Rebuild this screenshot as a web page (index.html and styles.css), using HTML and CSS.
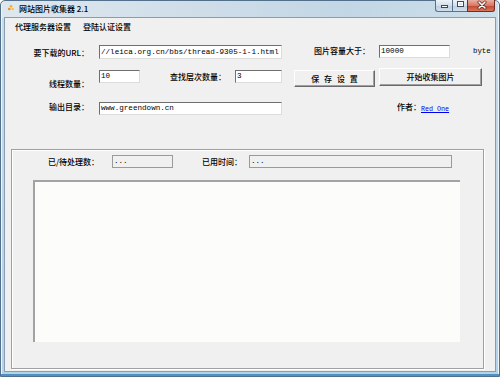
FILE: index.html
```html
<!DOCTYPE html>
<html lang="zh-CN">
<head>
<meta charset="utf-8">
<title>网站图片收集器 2.1</title>
<link rel="stylesheet" href="styles.css">
</head>
<body>
<div class="window">
  <div class="titlebar">
    <svg class="app-icon" width="6" height="6" viewBox="0 0 6 6">
      <circle cx="3" cy="1.3" r="1.3" fill="#f6b21c"/>
      <circle cx="1.3" cy="4" r="1.3" fill="#ef8d16"/>
      <circle cx="4.7" cy="4" r="1.3" fill="#f7c53a"/>
    </svg>
    <span class="title cjk">网站图片收集器 2.1</span>
    <div class="controls">
      <div class="ctl ctl-min">
        <svg width="17" height="12" viewBox="0 0 17 12"><rect x="5.5" y="6.5" width="6" height="2" fill="#fff" stroke="#3a4a5a" stroke-width="1"/></svg>
      </div>
      <div class="ctl ctl-max">
        <svg width="15" height="12" viewBox="0 0 15 12"><rect x="4.5" y="2.5" width="6" height="5" fill="none" stroke="#3a4a5a" stroke-width="1"/><rect x="5.5" y="3.5" width="4" height="3" fill="none" stroke="#fff" stroke-width="1"/></svg>
      </div>
      <div class="ctl ctl-close">
        <svg width="28" height="12" viewBox="0 0 28 12"><path d="M11 3 L17 9 M17 3 L11 9" stroke="#5a1f18" stroke-width="3" stroke-linecap="round"/><path d="M11 3 L17 9 M17 3 L11 9" stroke="#fff" stroke-width="1.6" stroke-linecap="round"/></svg>
      </div>
    </div>
  </div>
  <div class="client">
    <div class="menubar cjk">
      <span class="menu-item">代理服务器设置</span>
      <span class="menu-item">登陆认证设置</span>
    </div>
    <div class="form">
      <div class="row row1">
        <span class="lbl cjk lbl-url">要下载的URL：</span>
        <div class="input in-url">//leica.org.cn/bbs/thread-9305-1-1.html</div>
        <span class="cjk lbl-size">图片容量大于：</span>
        <div class="input in-size">10000</div>
        <span class="unit">byte</span>
      </div>
      <div class="row row2">
        <span class="lbl cjk lbl-threads">线程数量：</span>
        <div class="input in-threads">10</div>
        <span class="cjk lbl-depth">查找层次数量：</span>
        <div class="input in-depth">3</div>
        <div class="btn cjk btn-save">保 存 设 置</div>
        <div class="btn cjk btn-start">开始收集图片</div>
      </div>
      <div class="row row3">
        <span class="lbl cjk lbl-out">输出目录：</span>
        <div class="input in-out">www.greendown.cn</div>
        <span class="cjk lbl-author">作者：</span>
        <a class="link" href="#">Red One</a>
      </div>
    </div>
    <div class="group">
      <div class="status-row">
        <span class="cjk lbl-done">已/待处理数：</span>
        <div class="status-box box-count">...</div>
        <span class="cjk lbl-time">已用时间：</span>
        <div class="status-box box-time">...</div>
      </div>
      <div class="log"></div>
    </div>
  </div>
</div>
</body>
</html>
```

FILE: styles.css
```css
* { box-sizing: border-box; }
html, body { margin: 0; padding: 0; }
body { width: 500px; height: 377px; overflow: hidden; background: #fff; }

.cjk { font-family: "Noto Sans CJK SC", "Liberation Sans", sans-serif; font-size: 8px; font-weight: 500; color: #000; }

.window {
  width: 500px; height: 377px;
  display: flex; flex-direction: column;
  border: 1px solid #52708c;
  border-radius: 5px 5px 0 0;
  background:
    linear-gradient(90deg, #dfe7ee 0%, #cfdde9 40%, #c2d6e5 70%, #cddfeb 100%) top / 100% 17px no-repeat,
    linear-gradient(180deg, #c9dceb 0%, #b4d2e8 100%);
  box-shadow: inset 0 -2px 0 #4d92c4, inset 1px 0 0 #eef5fb, inset -1px 0 0 #eef5fb;
}

.titlebar { height: 16px; display: flex; align-items: flex-start; flex: none; }
.app-icon { margin: 4px 0 0 7px; flex: none; }
.title { margin: 2px 0 0 5px; line-height: 12px; font-size: 8px; }

.controls { margin: -1px 4px 0 auto; display: flex; height: 12px; }
.ctl { height: 12px; border: 1px solid #5e7286; border-top: none; }
.ctl svg { display: block; margin-top: -1px; }
.ctl-min { width: 17px; border-radius: 0 0 0 3px; border-right: none;
  background: linear-gradient(#eef3f8, #d3dfea 50%, #bccfe0 51%, #cfdfec); }
.ctl-max { width: 15px; border-right: none;
  background: linear-gradient(#eef3f8, #d3dfea 50%, #bccfe0 51%, #cfdfec); }
.ctl-close { width: 28px; border-radius: 0 0 3px 0; border-color: #6e2e25;
  background: linear-gradient(#eab0a2, #d77764 50%, #c24630 51%, #d8765c); }

.client {
  flex: 1;
  margin: 0 3px 4px 3px;
  background: #f0f0f0;
  border: 1px solid #8a9db0;
  display: flex; flex-direction: column;
}

.menubar { height: 17px; display: flex; gap: 12px; padding-left: 10px; line-height: 17px; flex: none; }

.form { flex: none; }
.row { display: flex; align-items: flex-start; }
.row1 { margin-top: 10px; height: 14px; }
.row2 { margin-top: 9px; height: 19px; }
.row3 { margin-top: 15px; height: 13px; }

.lbl { width: 84px; text-align: right; flex: none; white-space: nowrap; }
.lbl-url { line-height: 16px; }
.lbl-threads { margin-top: 10px; line-height: 12px; }
.lbl-out { margin-top: -1px; line-height: 12px; }

.input {
  flex: none;
  background: #fff;
  border: 1px solid;
  border-color: #6f6f6f #dcdcdc #dcdcdc #6f6f6f;
  font-family: "Liberation Mono", monospace;
  font-size: 7.6px;
  color: #000;
  padding-left: 1px;
  white-space: nowrap; overflow: hidden;
}
.in-url { margin-left: 10px; width: 183px; height: 14px; line-height: 12px; }
.in-size { width: 71px; height: 13px; line-height: 11px; }
.in-threads { margin-left: 10px; margin-top: 2px; width: 41px; height: 13px; line-height: 11px; }
.in-depth { margin-top: 2px; width: 47px; height: 13px; line-height: 11px; }
.in-out { margin-left: 10px; width: 183px; height: 13px; line-height: 11px; }

.lbl-size { margin-left: 32px; width: 65px; line-height: 12px; flex: none; white-space: nowrap; }
.unit { margin-left: 23px; line-height: 12px; font-family: "Liberation Mono", monospace; font-size: 7.4px; color: #000; }
.lbl-depth { margin-left: 30px; margin-top: 3px; width: 65px; line-height: 12px; flex: none; white-space: nowrap; }

.btn {
  flex: none;
  background: #f0f0f0;
  border: 1px solid;
  border-color: #ffffff #6a6a6a #6a6a6a #ffffff;
  box-shadow: inset -1px -1px 0 #a0a0a0;
  text-align: center;
  white-space: nowrap;
}
.btn-save { margin-left: 12px; margin-top: 2px; width: 81px; height: 17px; line-height: 15px; word-spacing: 3px; }
.btn-start { margin-left: 4px; width: 103px; height: 18px; line-height: 16px; }

.lbl-author { margin-left: 115px; margin-top: -1px; line-height: 12px; white-space: nowrap; }
.link { margin-top: 1px; line-height: 12px; font-family: "Liberation Mono", monospace; font-size: 6.7px; color: #0000ee; text-decoration: underline; }

.group {
  flex: none;
  margin: 34px 0 0 6px;
  width: 473px; height: 220px;
  border: 1px solid #a0a0a0;
  box-shadow: inset 1px 1px 0 #fff, 1px 1px 0 #fff;
}
.status-row { display: flex; margin-top: 5px; height: 13px; }
.lbl-done { margin-left: 36px; width: 64px; line-height: 13px; flex: none; white-space: nowrap; }
.lbl-time { margin-left: 29px; width: 47px; line-height: 13px; flex: none; white-space: nowrap; }
.status-box {
  flex: none; height: 13px;
  border: 1px solid #9a9a9a;
  font-family: "Liberation Mono", monospace; font-size: 7.6px; line-height: 10px;
  padding-left: 1px; color: #000;
}
.box-count { width: 61px; }
.box-time { width: 203px; }

.log {
  margin: 12px 0 0 21px;
  width: 427px; height: 162px;
  background: #fcfdfb;
  border-top: 2px solid #a3a3a3;
  border-left: 2px solid #a3a3a3;
}
```
